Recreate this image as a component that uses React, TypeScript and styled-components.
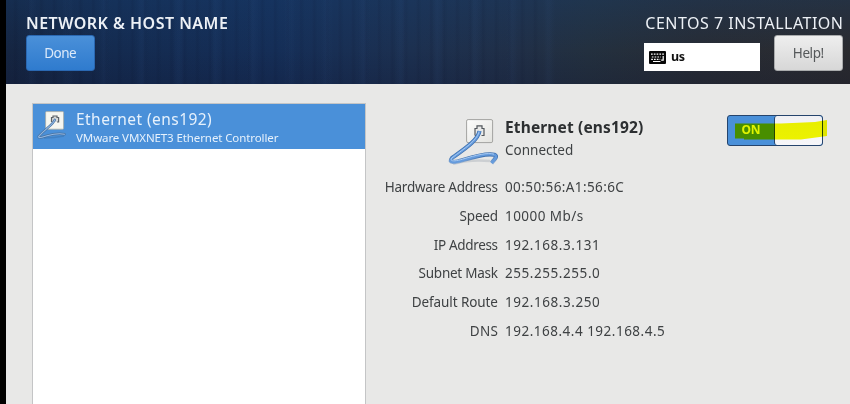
import React from 'react';
import styled, { createGlobalStyle } from 'styled-components';

const GlobalStyle = createGlobalStyle`
  * { box-sizing: border-box; }
  body { margin: 0; background: #000; font-family: "Noto Sans", "Open Sans", sans-serif; }
`;

const Screen = styled.div`
  height: 404px;
  padding-left: 6px;
  background: #000;
  overflow: hidden;
`;

const Installer = styled.div`
  height: 100%;
  background: #e8e8e7;
  color: #3f4244;
`;

const Header = styled.header`
  height: 84px;
  padding: 12px 7px 0 20px;
  display: flex;
  justify-content: space-between;
  background:
    repeating-linear-gradient(90deg, rgba(70, 120, 190, 0) 0 19px, rgba(70, 120, 190, 0.05) 24px 25px, rgba(0, 0, 20, 0) 31px 37px) 0 0 / 560px 100% no-repeat,
    repeating-linear-gradient(90deg, rgba(0, 0, 20, 0) 0 7px, rgba(0, 0, 20, 0.07) 9px, rgba(0, 0, 20, 0) 13px) 0 0 / 540px 100% no-repeat,
    linear-gradient(180deg, rgba(24, 66, 116, 0.28), rgba(20, 30, 60, 0) 60%, rgba(15, 15, 40, 0.2)) 0 0 / 100% 100%,
    linear-gradient(90deg, #152541 0%, #142b50 13%, #152e57 32%, #1c3050 48%, #202f47 61%, #23303f 69%, #272c35 82%, #2a2b2f 100%);
`;

const HeaderSide = styled.div<{ $end?: boolean }>`
  display: flex;
  flex-direction: column;
  align-items: ${(p) => (p.$end ? 'flex-end' : 'flex-start')};
`;

const Label = styled.span<{ $size?: number; $track?: number; $weight?: number; $line?: number }>`
  font-size: ${(p) => p.$size ?? 13.5}px;
  font-weight: ${(p) => p.$weight ?? 400};
  letter-spacing: ${(p) => p.$track ?? 0}px;
  line-height: ${(p) => p.$line ?? 20}px;
  margin-right: ${(p) => -(p.$track ?? 0)}px;
  white-space: nowrap;
`;

const HeaderTitle = styled(Label)`
  color: #edf1f6;
  height: 23px;
`;

const Controls = styled.div`
  display: flex;
  align-items: flex-end;
  gap: 14px;
`;

const Button = styled.button<{ $primary?: boolean }>`
  width: 69px;
  height: 36px;
  padding: 0 0 3px;
  font: inherit;
  border-radius: 3px;
  border: 1px solid ${(p) => (p.$primary ? '#2a68b2' : '#a9abac')};
  background: ${(p) => (p.$primary ? 'linear-gradient(#4a90d9, #2f7bce)' : 'linear-gradient(#eeeeee, #d7d7d7)')};
  color: ${(p) => (p.$primary ? '#dceafa' : '#55585a')};
`;

const KeyboardLayout = styled.div`
  width: 116px;
  height: 28px;
  padding-left: 5px;
  display: flex;
  align-items: center;
  gap: 5px;
  background: #fff;
  color: #111;
`;

const Content = styled.main`
  display: flex;
  height: 320px;
  padding: 19px 27px 0 26px;
`;

const DeviceList = styled.div`
  width: 334px;
  height: 301px;
  border: 1px solid #c4c5c6;
  border-bottom: 0;
  background: #fff;
`;

const DeviceRow = styled.div`
  display: flex;
  height: 45px;
  padding: 5px 0 0 4px;
  gap: 10px;
  background: #4a90d9;
  color: #e6f1fc;
`;

const Stack = styled.div`
  display: flex;
  flex-direction: column;
  align-items: flex-start;
`;

const Details = styled.section`
  flex: 1;
  padding-top: 12px;
`;

const DeviceHeader = styled.div`
  display: flex;
  height: 58px;
  padding-left: 82px;
`;

const DeviceName = styled(Stack)`
  margin-left: 6px;
  padding-top: 1px;
  flex: 1;
`;

const BoldName = styled(Label)`
  color: #2c2f31;
`;

const Properties = styled.dl`
  margin: 0;
  display: grid;
  grid-template-columns: 132px auto;
  grid-auto-rows: 28.8px;
  column-gap: 7px;
`;

const Term = styled.dt`
  text-align: right;
`;

const Value = styled.dd`
  margin: 0;
`;

const Switch = styled.div`
  position: relative;
  width: 96px;
  height: 31px;
  display: flex;
  border: 1px solid #25446d;
  border-radius: 3px;
  background: #4a90d9;
`;

const SwitchOn = styled.div`
  width: 46px;
  padding-top: 1px;
  text-align: center;
`;

const SwitchKnob = styled.div`
  flex: 1;
  border-left: 1px solid #25446d;
  border-radius: 3px;
  background: linear-gradient(#f0f0f3, #f6f6f9);
`;

const Marker = styled.svg`
  position: absolute;
  left: 7px;
  top: 3px;
  mix-blend-mode: multiply;
`;

const OnLabel = styled(Label)`
  position: relative;
  z-index: 1;
  color: #e0f400;
`;

function KeyboardIcon() {
  return (
    <svg width="17" height="13" viewBox="0 0 17 13">
      <rect width="17" height="13" rx="1" fill="#080808" />
      <g stroke="#fff" strokeWidth="1.2" fill="none">
        <path d="M2 3.2h13" strokeDasharray="1.7 1.1" />
        <path d="M2.8 6h9" strokeDasharray="1.7 1.1" />
        <path d="M2.2 8.4h9" strokeDasharray="1.7 1.1" />
        <path d="M4 10.5h7.4M14.2 5v4.2h-2" />
      </g>
    </svg>
  );
}

function SmallWiredIcon() {
  return (
    <svg width="29" height="32" viewBox="0 0 29 32">
      <rect x="8.6" y="2.6" width="18" height="17.6" rx="1" fill="#f6f6f0" stroke="#a6a9a5" strokeWidth="0.8" />
      <path d="M14.5 13V8.5H16V7h4v1.500h1.600V13H20" fill="#d6d9d9" stroke="#5c6267" strokeWidth="1.2" />
      <path d="M7 29q10 0 20-2" stroke="#356fae" strokeWidth="1.5" opacity=".5" fill="none" />
      <path d="M17.8 10.8C16.500 15 9 19.500 1.800 27.300C.8 29.800 5 28.200 10 26.700C17 24.800 22 24.300 27.500 25.200" fill="none" stroke="#47719f" strokeWidth="2.4" strokeLinecap="round" />
      <path d="M17.8 10.8C16.500 15 9 19.500 1.800 27.300C.8 29.800 5 28.200 10 26.700C17 24.800 22 24.300 27.500 25.200" fill="none" stroke="#94b9e5" strokeWidth="1.1" strokeLinecap="round" />
    </svg>
  );
}

function WiredIcon() {
  return (
    <svg width="51" height="50" viewBox="0 0 51 50">
      <defs>
        <linearGradient id="plate" x2="1" y2="1">
          <stop stopColor="#fdfdfc" />
          <stop offset="1" stopColor="#e3e3df" />
        </linearGradient>
        <linearGradient id="cableFade" x2="0" y2="1">
          <stop offset=".8" stopColor="#3f70ae" />
          <stop offset="1" stopColor="#8eacd2" />
        </linearGradient>
      </defs>
      <path d="M5 49Q22 44 42 46" fill="none" stroke="#b9bec5" strokeWidth="2.5" opacity=".6" />
      <rect x="18.6" y="4.6" width="26" height="23" rx="1.5" fill="url(#plate)" stroke="#a3a3a0" />
      <path d="M27 20.5V13.5H29V10.8H34V13.5H36V20.5H33.5M27 20.5H29" fill="#e8e9e8" stroke="#53585d" strokeWidth="1.2" />
      <path d="M31.5 16C30 25 18 33 4 43C-.5 48.500 7 47.500 15 45C28 41 40 38 46.300 39.800C50 41.200 47 44 43.500 48" fill="none" stroke="url(#cableFade)" strokeWidth="4.2" />
      <path d="M31.5 16C30 25 18 33 4 43C-.5 48.500 7 47.500 15 45C28 41 40 38 46.300 39.800C50 41.200 47 44 43.500 48" fill="none" stroke="#659bdd" strokeWidth="2.6" />
      <path d="M31 17C29 25.500 17 33 3.800 43C1 46.800 7 46.400 14.600 44.200C28 40 40 37.200 46 39.200" fill="none" stroke="#a7c9f1" strokeWidth="1" />
    </svg>
  );
}

const properties = [
  { term: 'Hardware Address', termTrack: -0.24, value: '00:50:56:A1:56:6C', track: 0.4 },
  { term: 'Speed', termTrack: -0.2, value: '10000 Mb/s', track: 0.44 },
  { term: 'IP Address', termTrack: -0.34, value: '192.168.3.131', track: 0.56 },
  { term: 'Subnet Mask', termTrack: -0.25, value: '255.255.255.0', track: 0.56 },
  { term: 'Default Route', termTrack: -0.08, value: '192.168.3.250', track: 0.56 },
  { term: 'DNS', termTrack: 0.4, value: '192.168.4.4 192.168.4.5', track: 0.5 },
];

export default function App() {
  return (
    <Screen>
      <GlobalStyle />
      <Installer>
        <Header>
          <HeaderSide>
            <HeaderTitle $size={16} $weight={600} $track={0.48} $line={22}>NETWORK &amp; HOST NAME</HeaderTitle>
            <Button $primary><Label $track={-0.5}>Done</Label></Button>
          </HeaderSide>
          <HeaderSide $end>
            <HeaderTitle $size={16} $track={0.5} $line={22}>CENTOS 7 INSTALLATION</HeaderTitle>
            <Controls>
              <KeyboardLayout>
                <KeyboardIcon />
                <Label $size={12.5} $weight={700} $track={-0.3}>us</Label>
              </KeyboardLayout>
              <Button><Label $track={-0.4}>Help!</Label></Button>
            </Controls>
          </HeaderSide>
        </Header>
        <Content>
          <DeviceList>
            <DeviceRow>
              <SmallWiredIcon />
              <Stack>
                <Label $size={15.5} $track={0.45} $line={20}>Ethernet (ens192)</Label>
                <Label $size={11.5} $track={-0.1} $line={18}>VMware VMXNET3 Ethernet Controller</Label>
              </Stack>
            </DeviceRow>
          </DeviceList>
          <Details>
            <DeviceHeader>
              <WiredIcon />
              <DeviceName>
                <BoldName $size={15.5} $weight={700} $track={0.14} $line={23}>Ethernet (ens192)</BoldName>
                <Label $line={23}>Connected</Label>
              </DeviceName>
              <Switch>
                <SwitchOn><OnLabel $size={12} $weight={700} $track={-0.2}>ON</OnLabel></SwitchOn>
                <SwitchKnob />
                <Marker width="93" height="22" viewBox="0 0 93 22">
                  <path d="M0 4.500H46L80 3L92 1V17L66 20.500H9V19.500H0Z" fill="#f6fc00" />
                </Marker>
              </Switch>
            </DeviceHeader>
            <Properties>
              {properties.map((p) => (
                <React.Fragment key={p.term}>
                  <Term><Label $track={p.termTrack} $line={28.8}>{p.term}</Label></Term>
                  <Value><Label $track={p.track} $line={28.8}>{p.value}</Label></Value>
                </React.Fragment>
              ))}
            </Properties>
          </Details>
        </Content>
      </Installer>
    </Screen>
  );
}
